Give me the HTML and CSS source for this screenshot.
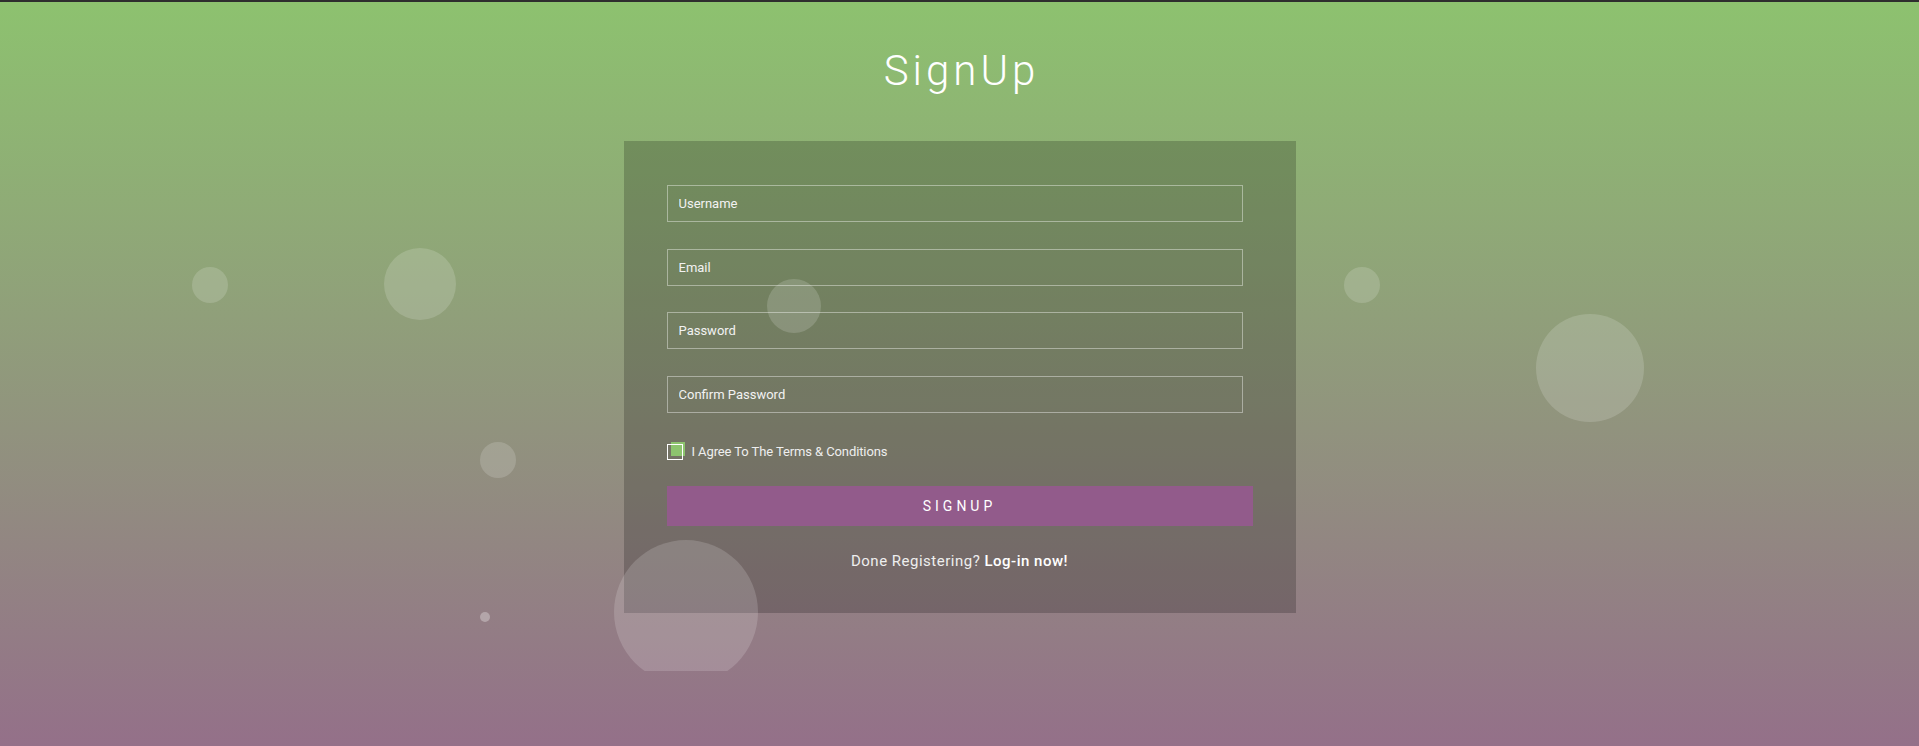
FILE: index.html
```html
<!DOCTYPE html>
<html lang="en">
<head>
<meta charset="utf-8">
<title>SignUp</title>
<link rel="stylesheet" href="styles.css">
</head>
<body>
<div class="topbar"></div>
<main class="page">
  <h1 class="title">SignUp</h1>
  <form class="card" action="#">
    <input class="field" type="text" placeholder="Username">
    <input class="field" type="email" placeholder="Email">
    <input class="field" type="password" placeholder="Password">
    <input class="field" type="password" placeholder="Confirm Password">
    <label class="agree">
      <span class="check"></span>
      <span class="agree-text">I Agree To The Terms &amp; Conditions</span>
    </label>
    <button class="submit" type="button">SIGNUP</button>
    <p class="login">Done Registering? <a class="login-link" href="#">Log-in now!</a></p>
  </form>
</main>
<ul class="bubbles">
  <li class="bubble b1"></li>
  <li class="bubble b2"></li>
  <li class="bubble b3"></li>
  <li class="bubble b4"></li>
  <li class="bubble b5"></li>
  <li class="bubble b6"></li>
  <li class="bubble b7"></li>
  <li class="bubble b8"></li>
</ul>
</body>
</html>
```
FILE: styles.css
```css
html, body {
  margin: 0;
  padding: 0;
}

body {
  min-height: 746px;
  position: relative;
  font-family: Roboto, "Liberation Sans", sans-serif;
  background: linear-gradient(to bottom, #8dc26f 0%, #947089 100%);
  overflow: hidden;
}

.topbar {
  height: 2px;
  background: #2e2e2e;
}

.page {
  padding-top: 44px;
  display: flex;
  flex-direction: column;
  align-items: center;
}

.title {
  margin: 0;
  font-size: 42px;
  line-height: 49px;
  font-weight: 300;
  letter-spacing: 4px;
  color: #fff;
  padding-left: 4px;
}

.card {
  margin-top: 46px;
  width: 672px;
  box-sizing: border-box;
  padding: 44px 43px 41px;
  background: rgba(0, 0, 0, 0.2);
  display: flex;
  flex-direction: column;
}

.field {
  display: block;
  box-sizing: border-box;
  width: calc(100% - 10px);
  height: 37px;
  margin: 0 0 26.5px;
  padding: 0 11px;
  border: 1px solid rgba(255, 255, 255, 0.4);
  background: transparent;
  font-family: Roboto, "Liberation Sans", sans-serif;
  font-size: 13px;
  color: #fff;
  outline: none;
}

.field:last-of-type {
  margin-bottom: 0;
}

.field::placeholder {
  color: #f2f2f2;
  opacity: 1;
}

.agree {
  margin-top: 31.5px;
  height: 16px;
  display: flex;
  align-items: center;
  gap: 9px;
  cursor: pointer;
}

.check {
  position: relative;
  width: 16px;
  height: 16px;
  flex: none;
}

.check::before {
  content: "";
  position: absolute;
  left: 4px;
  top: -2px;
  width: 14px;
  height: 14px;
  background: #8dc46e;
}

.check::after {
  content: "";
  position: absolute;
  inset: 0;
  border: 1px solid #fff;
}

.agree-text {
  font-size: 13px;
  color: #eee;
  line-height: 16px;
  letter-spacing: -0.1px;
}

.submit {
  margin-top: 26px;
  height: 40px;
  width: 100%;
  border: 0;
  background: #925b8b;
  color: #fff;
  font-family: Roboto, "Liberation Sans", sans-serif;
  font-size: 14px;
  font-weight: 400;
  letter-spacing: 4px;
  cursor: pointer;
}

.login {
  margin: 24px 0 0;
  text-align: center;
  font-size: 15px;
  line-height: 22px;
  color: #eee;
  letter-spacing: 0.5px;
}

.login-link {
  color: #fff;
  font-weight: 500;
  text-decoration: none;
}

.bubbles {
  position: absolute;
  top: 0;
  left: 0;
  width: 100%;
  height: 671px;
  margin: 0;
  padding: 0;
  list-style: none;
  overflow: hidden;
  pointer-events: none;
  z-index: 2;
}

.bubble {
  position: absolute;
  border-radius: 50%;
  background: rgba(255, 255, 255, 0.16);
}

.b1 { left: 192px; top: 267px; width: 36px; height: 36px; }
.b2 { left: 384px; top: 248px; width: 72px; height: 72px; }
.b3 { left: 480px; top: 442px; width: 36px; height: 36px; }
.b4 { left: 767px; top: 279px; width: 54px; height: 54px; }
.b5 { left: 1344px; top: 267px; width: 36px; height: 36px; }
.b6 { left: 1536px; top: 314px; width: 108px; height: 108px; }
.b7 { left: 480px; top: 612px; width: 10px; height: 10px; background: rgba(255, 255, 255, 0.3); }
.b8 { left: 614px; top: 540px; width: 144px; height: 144px; }
```
